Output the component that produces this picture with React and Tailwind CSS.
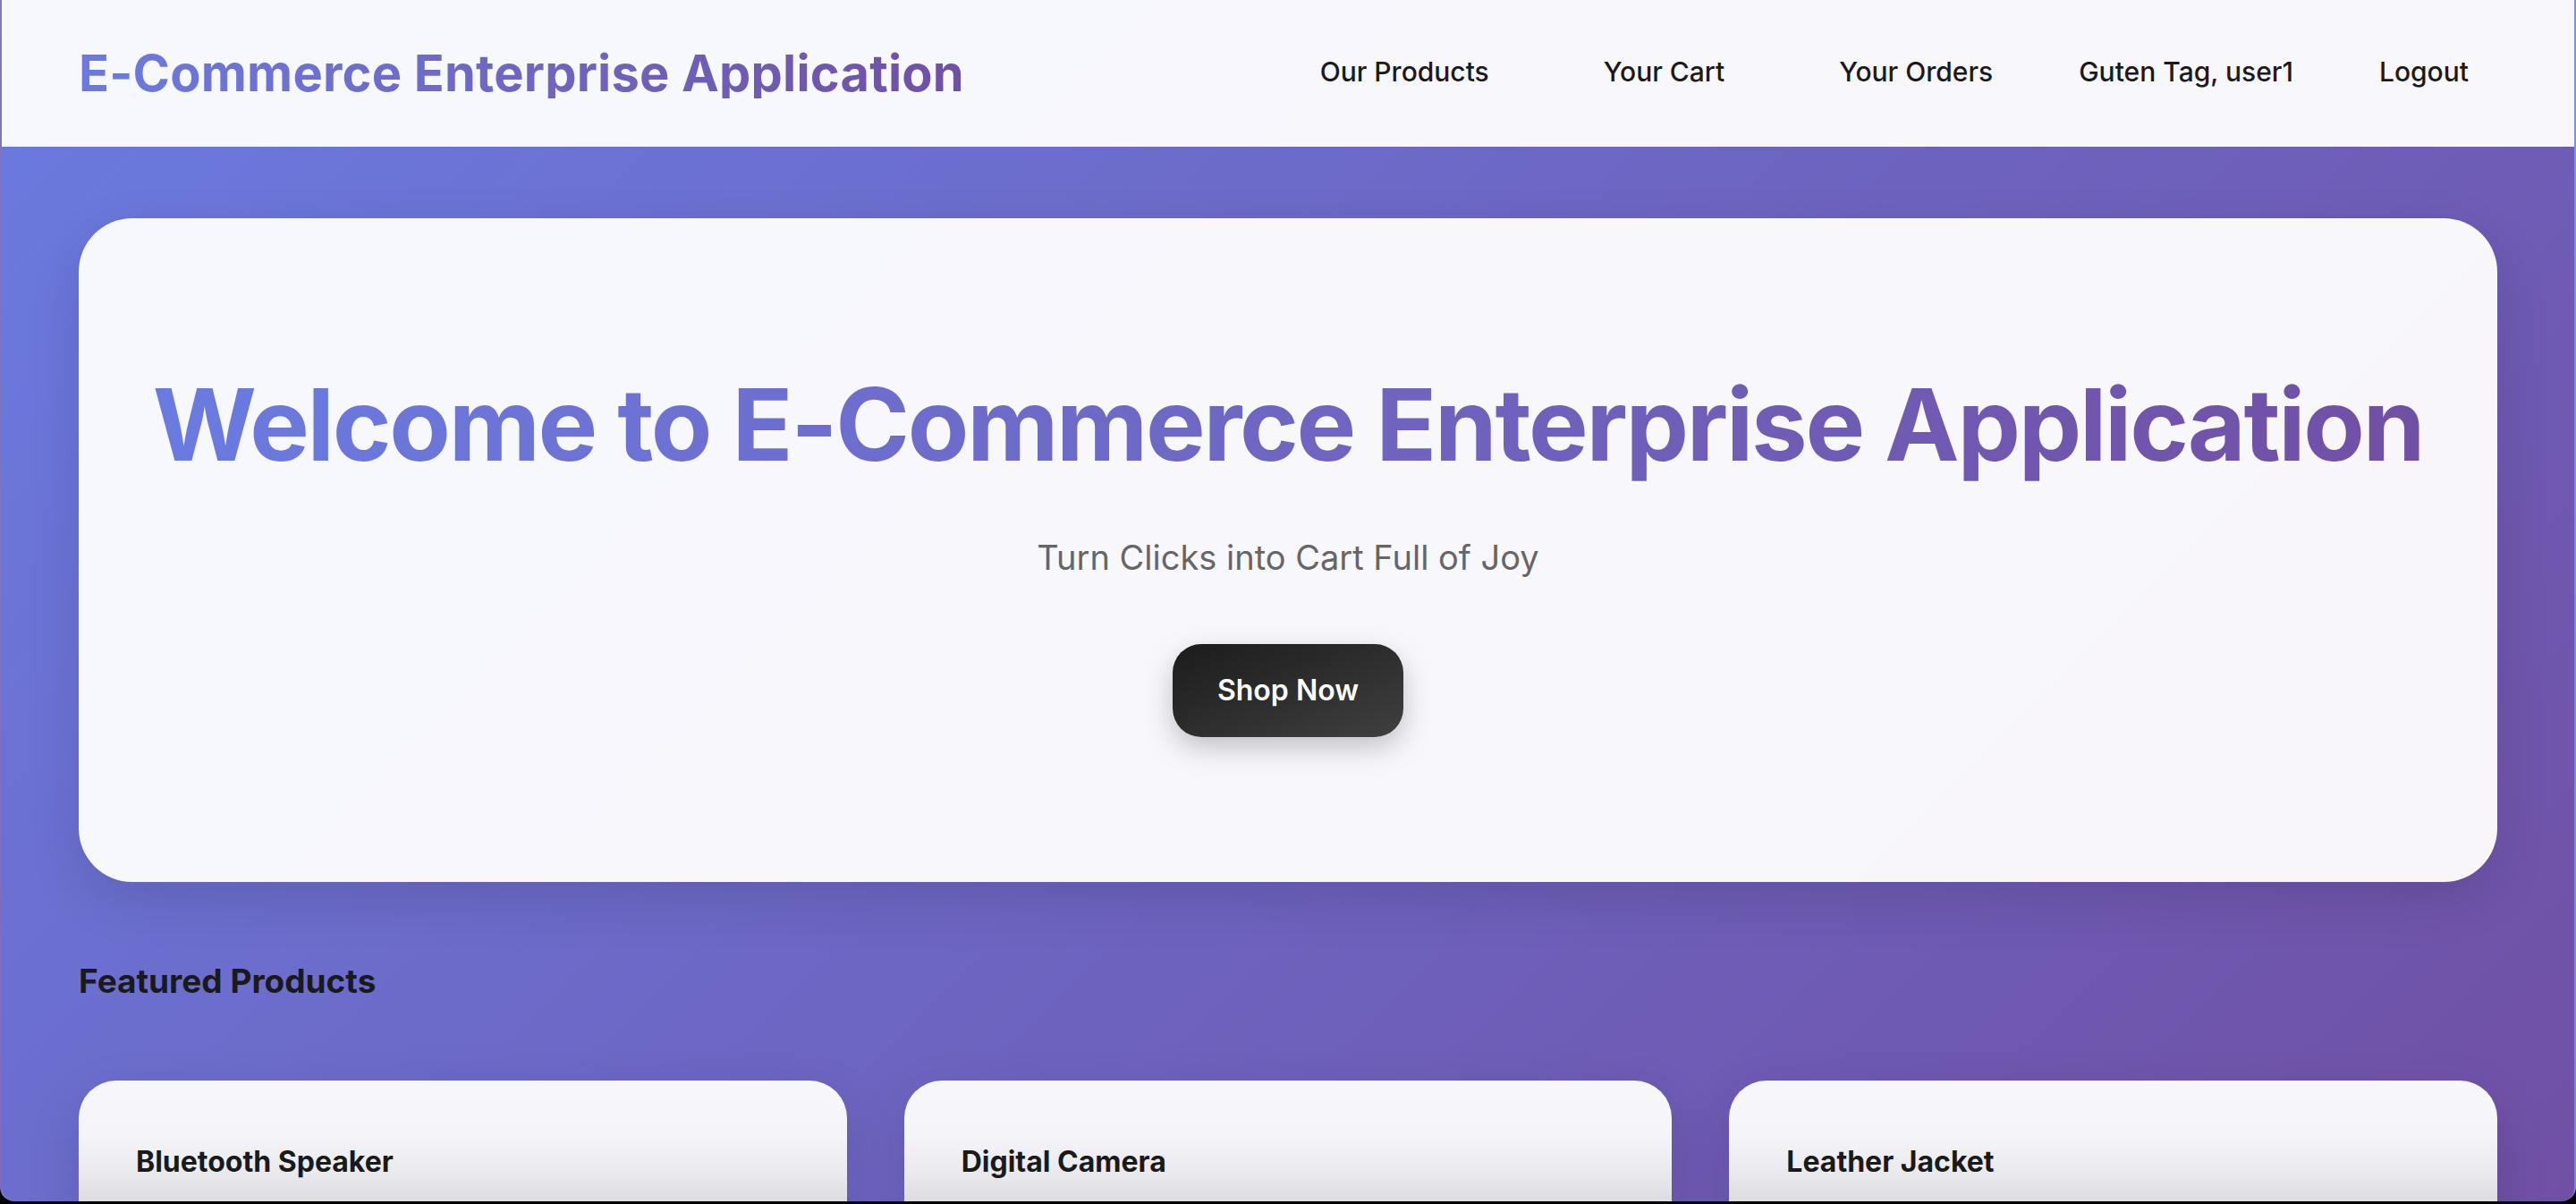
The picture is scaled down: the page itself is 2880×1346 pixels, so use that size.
import React from "react";

const products = [
  { id: 1, name: "Bluetooth Speaker" },
  { id: 2, name: "Digital Camera" },
  { id: 3, name: "Leather Jacket" },
];

export default function App() {
  return (
    <div className="h-screen bg-black font-['Inter',sans-serif]">
      <div className="h-[1343px] overflow-hidden rounded-b-[16px] border-x-2 border-white/15 bg-[linear-gradient(135deg,#6a7be0_0%,#7050a5_100%)]">
        {/* Header */}
        <header className="h-[164px] bg-white/95">
          <div className="h-full px-[86px] flex items-center justify-between">
            <h1 className="text-[56px] font-bold leading-none tracking-[0.2px] bg-gradient-to-r from-[#6a7be0] to-[#7050a5] bg-clip-text text-transparent">
              E-Commerce Enterprise Application
            </h1>
            <nav className="flex items-center gap-16 pb-[4px] text-[30px] font-medium text-[#1a1a1a]">
              <a className="px-8">Our Products</a>
              <a className="px-8">Your Cart</a>
              <a className="px-8">Your Orders</a>
              <span>Guten Tag, user1</span>
              <a className="px-8">Logout</a>
            </nav>
          </div>
        </header>

        <main className="px-[86px] pt-[80px]">
          {/* Hero */}
          <section className="rounded-[60px] bg-white/95 pt-[163px] pb-[162px] text-center shadow-[0_20px_60px_rgba(0,0,0,0.12)]">
            <h2 className="inline-block text-[112px] font-bold leading-[1.2] tracking-[-2.3px] bg-gradient-to-r from-[#6a7be0] to-[#7050a5] bg-clip-text text-transparent">
              Welcome to E-Commerce Enterprise Application
            </h2>
            <p className="mt-[54px] text-[38px] leading-[1.5] text-[#666]">
              Turn Clicks into Cart Full of Joy
            </p>
            <button className="mt-[68px] rounded-[32px] bg-gradient-to-br from-[#1c1c1c] to-[#404040] px-[50px] py-[32px] text-[32px] font-semibold leading-[40px] text-white shadow-[0_12px_32px_rgba(0,0,0,0.22)]">
              Shop Now
            </button>
          </section>

          {/* Featured */}
          <section className="pt-[89px]">
            <h3 className="text-[37px] font-bold leading-[1.2] text-[#1a1a1a]">
              Featured Products
            </h3>
            <div className="mt-[88px] grid grid-cols-3 gap-16">
              {products.map((p) => (
                <div
                  key={p.id}
                  className="h-[500px] rounded-[42px] px-[64px] pt-[72px] shadow-[0_20px_60px_rgba(0,0,0,0.12)] bg-[linear-gradient(to_bottom,#f8f8fc_0px,#f5f5f9_60px,#ebebef_100px,#dcdce0_137px,#d6d6da_200px)]"
                >
                  <h4 className="text-[32px] font-bold leading-[1.2] text-[#1a1a1a]">
                    {p.name}
                  </h4>
                </div>
              ))}
            </div>
          </section>
        </main>
      </div>
    </div>
  );
}
